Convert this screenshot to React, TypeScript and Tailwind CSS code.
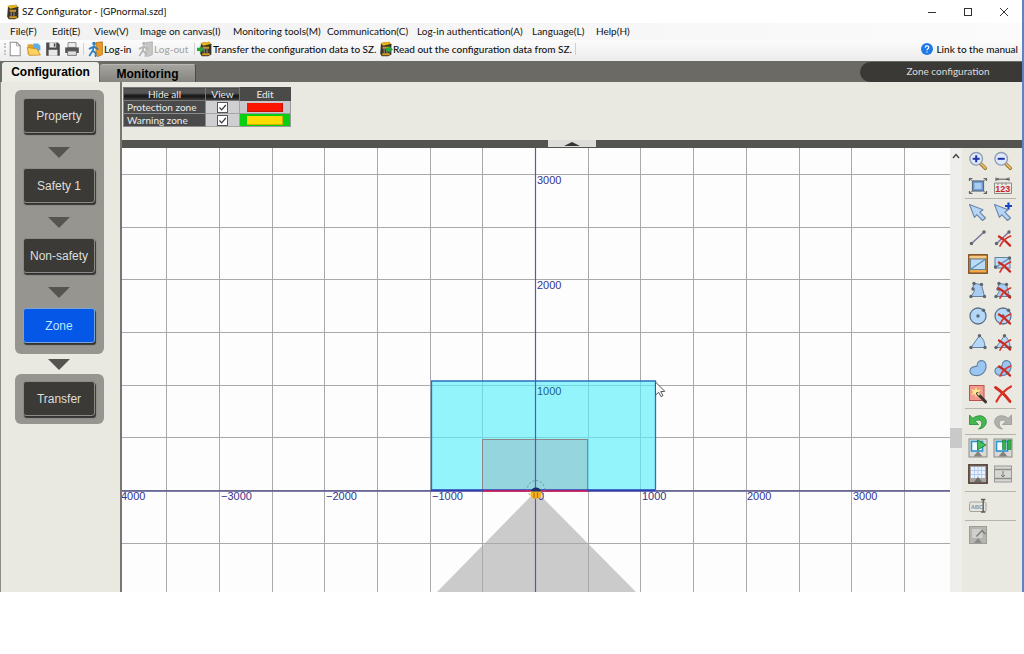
import { useState, type ReactNode } from "react";

const MENUS = [
  { label: "File(F)", width: "w-[42px]" },
  { label: "Edit(E)", width: "w-[42px]" },
  { label: "View(V)", width: "w-[46px]" },
  { label: "Image on canvas(I)", width: "w-[93px]" },
  { label: "Monitoring tools(M)", width: "w-[94px]" },
  { label: "Communication(C)", width: "w-[90px]" },
  { label: "Log-in authentication(A)", width: "w-[115px]" },
  { label: "Language(L)", width: "w-[64px]" },
  { label: "Help(H)", width: "w-[42px]" },
];

const Icon = ({ children, className = "size-5" }: { children: ReactNode; className?: string }) => (
  <svg viewBox="0 0 20 20" className={`${className} shrink-0`} fill="none" aria-hidden="true">
    {children}
  </svg>
);

/* ---------- shared icon parts ---------- */
const RedX = () => (
  <>
    <path d="M6 8.5 C10 10.5 14 14 17 17.5" stroke="#c8281e" strokeWidth="2.4" strokeLinecap="round" />
    <path d="M17.5 8 C13 10 9 13.5 7 18" stroke="#d8352a" strokeWidth="1.8" strokeLinecap="round" />
  </>
);
const Dot = ({ x, y }: { x: number; y: number }) => <circle cx={x} cy={y} r="1.7" fill="#5c6670" />;

const Magnifier = ({ plus }: { plus?: boolean }) => (
  <Icon>
    <path d="M12.5 12.5 L17.3 17.3" stroke="#9a7a3a" strokeWidth="3.6" strokeLinecap="round" />
    <path d="M13 12.6 L17.3 17" stroke="#e8b860" strokeWidth="1.8" strokeLinecap="round" />
    <circle cx="8.2" cy="7.8" r="6.3" fill="#dfe9fa" stroke="#8f9db5" strokeWidth="1.4" />
    <path d="M4.7 7.8 H11.7" stroke="#1d35a8" strokeWidth="2" />
    {plus && <path d="M8.2 4.3 V11.3" stroke="#1d35a8" strokeWidth="2" />}
  </Icon>
);
const Fit = () => (
  <Icon>
    <rect x="4.5" y="5" width="11" height="10" fill="#6f9fd8" stroke="#5b6b80" strokeWidth="1.2" />
    <rect x="6.5" y="7" width="7" height="6" fill="#a8ccf2" />
    <path d="M1.5 5V2.5H4.5M15.5 2.5H18.5V5M18.5 15V17.5H15.5M4.5 17.5H1.5V15" stroke="#666" strokeWidth="1.2" />
    <path d="M2 3L4.5 5M18 3L15.5 5M18 17L15.5 15M2 17L4.5 15" stroke="#777" />
  </Icon>
);
const Ruler = () => (
  <Icon>
    <path d="M3 3.2H16M3 1.5V5M16 1.5V5" stroke="#555" />
    <path d="M3 3.2L5.5 1.8V4.6ZM16 3.2L13.5 1.8V4.6Z" fill="#555" />
    <path d="M1.5 17.5V7H18.5V17.5H1.5M5 7V9M9 7V9M13 7V9" stroke="#8a8a86" />
    <text x="2.3" y="16.3" fontSize="9" fontWeight="bold" fill="#c9252c" fontFamily="Liberation Sans, sans-serif">123</text>
  </Icon>
);
const Arrow = ({ plus }: { plus?: boolean }) => (
  <Icon>
    <path d="M1.5 2.5L15 7.8L11.8 10.2L17.5 16L14.5 18.5L8.8 12.6L6.5 15.5Z" fill="#b5d5f7" stroke="#6d86a8" strokeWidth="1.1" strokeLinejoin="round" />
    {plus && <path d="M15.5 0.5V7.5M12 4H19" stroke="#1646c8" strokeWidth="2.2" />}
  </Icon>
);
const LineTool = ({ del }: { del?: boolean }) => (
  <Icon>
    <path d="M3.5 15.5L15.5 4.5" stroke="#7c6f96" strokeWidth="1.4" />
    <Dot x={3.5} y={15.5} />
    <Dot x={16} y={4} />
    {del && <RedX />}
  </Icon>
);
const RectTool = ({ del, active }: { del?: boolean; active?: boolean }) => (
  <Icon>
    {active && <rect x="0.8" y="0.8" width="18.4" height="18.4" fill="#f3a94b" stroke="#7a4c22" strokeWidth="1.4" />}
    <rect x={active ? 2.5 : 2} y={active ? 5 : 3.5} width="15" height="10.5" fill="#b9dbf7" stroke="#66839c" />
    <path d={active ? "M3 15L17 5.5" : "M2.5 13.5L16.5 4"} stroke="#5e88ac" strokeWidth="1.2" />
    {active && <path d="M1.5 3H18.5" stroke="#fbd698" strokeWidth="1.5" />}
    {del && (
      <>
        <Dot x={2.5} y={13} />
        <Dot x={16.5} y={4} />
        <RedX />
      </>
    )}
  </Icon>
);
const PolyTool = ({ del }: { del?: boolean }) => (
  <Icon>
    <path d="M6 3.5L13.5 4.5L16.5 16.5H3L6.5 11L4.5 8.5Z" fill="#a9cdf2" stroke="#6b8199" />
    <Dot x={6} y={3.5} />
    <Dot x={13.5} y={4.5} />
    <Dot x={16.5} y={16.5} />
    <Dot x={3} y={16.5} />
    <Dot x={5} y={9} />
    {del && <RedX />}
  </Icon>
);
const CircleTool = ({ del }: { del?: boolean }) => (
  <Icon>
    <circle cx="10" cy="10" r="8" fill="#b4d8fa" stroke="#5f7187" strokeWidth="1.3" />
    <Dot x={10} y={10} />
    <Dot x={15.5} y={4.3} />
    {del && <RedX />}
  </Icon>
);
const SectorTool = ({ del }: { del?: boolean }) => (
  <Icon>
    <path d="M3 15.5L11.5 3.5Q17 7.5 17 15.5Z" fill="#b4d8fa" stroke="#6b8199" />
    <Dot x={3} y={15.5} />
    <Dot x={11.5} y={3.8} />
    <Dot x={17} y={15.5} />
    {del && <RedX />}
  </Icon>
);
const BlobTool = ({ del }: { del?: boolean }) => (
  <Icon>
    <path d="M9 8.2C8.5 4 12 2 14.8 2.8C18.5 4 18.8 9 17 12.5C15 16.5 11 18 7 17.5C2.5 17 1 13.5 2.5 10.8C4 8.3 7 8.6 9 8.2Z" fill="#9ac6f2" stroke="#5f7d9c" strokeWidth="1.1" />
    {del && <RedX />}
  </Icon>
);
const Wand = () => (
  <Icon>
    <rect x="1.5" y="1.5" width="14.5" height="15" fill="#f29a8c" stroke="#c0504a" />
    <path d="M8 3L9.3 6.2L13 5.2L10.6 8.2L13 11L9.4 10L8 13.5L6.7 10L3.2 11L5.4 8.2L3.2 5.2L6.8 6.2Z" fill="#ffe98a" />
    <path d="M9.5 9.5L17.5 17.8" stroke="#3c3630" strokeWidth="3" strokeLinecap="round" />
    <path d="M9.5 9L11.5 11" stroke="#e9d9ae" strokeWidth="2" />
  </Icon>
);
const DeleteAll = () => (
  <Icon>
    <path d="M2.5 3.5C7 6.5 13 12 17 17.5" stroke="#d42a20" strokeWidth="2.8" strokeLinecap="round" />
    <path d="M18 2.5C11.5 6 6.5 11.5 3.5 17.5" stroke="#d8352a" strokeWidth="2.2" strokeLinecap="round" />
  </Icon>
);
const Undo = ({ redo }: { redo?: boolean }) => (
  <Icon className={redo ? "size-5 -scale-x-100" : "size-5"}>
    <path
      d="M1.5 3V12.5H10.5L7.3 9.3C10.5 6.8 14 8.5 13.8 11.8C13.7 14 12.5 15.8 10.5 17C15.5 16.5 18.5 13.2 18.3 9.4C18 3.6 10.5 1.7 4.8 6.3Z"
      fill={redo ? "#b0b0ac" : "#45b84f"}
      stroke={redo ? "#969692" : "#1d8a30"}
      strokeWidth="0.8"
    />
  </Icon>
);
const Play = ({ pause }: { pause?: boolean }) => (
  <Icon>
    <rect x="1" y="1" width="18" height="18" fill="#d8d8d4" stroke="#8b8b87" />
    <rect x="3.5" y="3.5" width="11" height="9.5" fill="#f4faff" stroke="#2b95d2" strokeWidth="1.6" />
    <path d="M10 13L14.5 18.5H5.5Z" fill="#85827e" />
    {pause ? (
      <path d="M9.5 2H12.8V11.5H9.5ZM14.7 2H18V11.5H14.7Z" fill="#35b14f" stroke="#147a2b" strokeWidth="0.6" />
    ) : (
      <path d="M9.5 2L18 7L9.5 12Z" fill="#45c05c" stroke="#147a2b" strokeWidth="0.8" />
    )}
  </Icon>
);
const GridTool = () => (
  <Icon>
    <rect x="0.9" y="0.9" width="18.2" height="18.2" fill="#a7a4a2" stroke="#513c36" strokeWidth="1.6" />
    <rect x="3" y="3" width="14" height="11" fill="#e8f2ff" />
    <path d="M3 6.5H17M3 10.5H17M6.5 3V14M10 3V14M13.5 3V14" stroke="#a6c5e8" strokeWidth="0.8" />
    <path d="M10 13L14 18H6Z" fill="#6d6a6a" />
  </Icon>
);
const Splitter = () => (
  <Icon>
    <rect x="1.5" y="2" width="17" height="16" fill="#d6d6d2" stroke="#9a9a96" />
    <path d="M1.5 5.5H18.5M1.5 14.5H18.5" stroke="#8e8e8a" strokeWidth="1.4" />
    <path d="M10 7V13M8 11L10 13L12 11" stroke="#77777a" />
  </Icon>
);
const TextTool = () => (
  <Icon>
    <rect x="1.5" y="6" width="16.5" height="9.5" rx="1.5" fill="#e4e4e0" stroke="#a3a39f" />
    <text x="3" y="13" fontSize="5.5" fontWeight="bold" fill="#8e8e8a" fontFamily="Liberation Sans, sans-serif">ABC</text>
    <path d="M13 3.5H17.4M13 16H17.4M15.2 3.5V16" stroke="#5d5d5a" strokeWidth="1.4" />
  </Icon>
);
const Calibrate = () => (
  <Icon>
    <rect x="1.5" y="1.5" width="17" height="17" fill="#b4b4b0" stroke="#9c9c98" />
    <rect x="4" y="4" width="10.5" height="9" fill="#cfcfcb" />
    <path d="M10 13L14 18H6Z" fill="#8b8b87" />
    <path d="M8.5 11.5L14 5.5C15 7 16 8 17.5 9" stroke="#7d7d79" strokeWidth="1.4" />
  </Icon>
);
const Scanner = ({ dir }: { dir?: "in" | "out" }) => (
  <Icon className="size-4">
    <path d="M5 2.5L15 1L18 4V17L14 19H6L4 16Z" fill="#38342c" />
    <path d="M4 2.5L14.5 1L18 3.5L8 6Z" fill="#e9b41d" />
    <path d="M7 8.5H15M6.5 16.5H16" stroke="#d69a1c" strokeWidth="2.6" />
    <path d="M9 8V15M12.5 8V15" stroke="#8d8471" strokeWidth="1.4" />
    {dir === "in" && <path d="M0 8.5H3.5V6L9 10.5L3.5 15V12.5H0Z" fill="#28a83a" />}
    {dir === "out" && <path d="M11 8.5H14.5V6L20 10.5L14.5 15V12.5H11Z" fill="#28a83a" />}
  </Icon>
);
const Door = ({ off }: { off?: boolean }) => (
  <Icon className="size-4">
    <path d="M10 2L18 1V17L12 19.5L10 17Z" fill={off ? "#c6c6c6" : "#e89c2a"} stroke={off ? "#b0b0b0" : "#b86f14"} />
    <circle cx="7.5" cy="3" r="2.2" fill={off ? "#b5b5b5" : "#2d7fc2"} />
    <path d="M7.5 6L6 12L9.5 15V19M6 12L2 18M7.5 7L2 9.5M7.5 7L12 10" stroke={off ? "#b5b5b5" : "#2d7fc2"} strokeWidth="2.2" strokeLinecap="round" />
  </Icon>
);

const TOOLS: { first: boolean; cell: string; box: string; icons: [string, ReactNode][] }[] = [
  {
    first: true,
    cell: "h-[25px]",
    box: "",
    icons: [["Zoom in", <Magnifier plus />], ["Zoom out", <Magnifier />], ["Fit", <Fit />], ["Scale", <Ruler />]],
  },
  {
    first: false,
    cell: "h-[26px]",
    box: "pb-px",
    icons: [
      ["Select", <Arrow />], ["Add to selection", <Arrow plus />],
      ["Line", <LineTool />], ["Erase line", <LineTool del />],
      ["Rectangle", <RectTool active />], ["Erase rectangle", <RectTool del />],
      ["Polygon", <PolyTool />], ["Erase polygon", <PolyTool del />],
      ["Circle", <CircleTool />], ["Erase circle", <CircleTool del />],
      ["Sector", <SectorTool />], ["Erase sector", <SectorTool del />],
      ["Freehand", <BlobTool />], ["Erase freehand", <BlobTool del />],
      ["Auto", <Wand />], ["Delete", <DeleteAll />],
    ],
  },
  { first: false, cell: "h-[25px]", box: "", icons: [["Undo", <Undo />], ["Redo", <Undo redo />]] },
  {
    first: false,
    cell: "h-[26px]",
    box: "pb-1",
    icons: [["Play", <Play />], ["Pause", <Play pause />], ["Grid", <GridTool />], ["Split", <Splitter />]],
  },
  { first: false, cell: "h-[28px]", box: "", icons: [["Label", <TextTool />]] },
  { first: false, cell: "h-[28px]", box: "", icons: [["Calibrate", <Calibrate />]] },
];

const DownArrow = () => (
  <svg viewBox="0 0 22 11" className="h-[11px] w-[22px]" aria-hidden="true">
    <path d="M0 0H22L11 11Z" fill="#55544f" />
  </svg>
);

function StepButton({ label, active, onClick }: { label: string; active?: boolean; onClick: () => void }) {
  return (
    <button
      type="button"
      onClick={onClick}
      className={`h-[35px] w-[72px] rounded-[3px] border text-[12px] whitespace-nowrap shadow-[1px_2px_1px_#333] ${
        active ? "border-[#78a5d8] bg-[#0557e8] text-[#b9e6ff]" : "border-[#8b8a85] bg-[#3b3a36] text-[#dededb]"
      }`}
    >
      {label}
    </button>
  );
}

function Sidebar() {
  const [step, setStep] = useState("Zone");
  const steps = ["Property", "Safety 1", "Non-safety", "Zone"];
  return (
    <nav className="flex w-[122px] shrink-0 flex-col items-center border-r-2 border-l border-r-[#77766f] border-l-[#8c8c88] bg-[#e9e9e1] pt-2 pr-[3px]">
      <div className="flex w-[89px] flex-col items-center rounded-md bg-[#969590] pt-2 pb-[11px]">
        {steps.map((s, i) => (
          <div key={s} className="flex flex-col items-center">
            {i > 0 && (
              <div className="flex h-[35px] items-center pt-1">
                <DownArrow />
              </div>
            )}
            <StepButton label={s} active={s === step} onClick={() => setStep(s)} />
          </div>
        ))}
      </div>
      <div className="flex h-5 items-center">
        <DownArrow />
      </div>
      <div className="flex w-[89px] justify-center rounded-md bg-[#969590] pt-[7px] pb-2">
        <StepButton label="Transfer" active={step === "Transfer"} onClick={() => setStep("Transfer")} />
      </div>
    </nav>
  );
}

function ZoneTable() {
  const zones = [
    { name: "Protection zone", cell: "bg-[#c9c9cb]", swatch: "bg-[#fb1400]" },
    { name: "Warning zone", cell: "bg-[#08d010]", swatch: "bg-[#ffdc00]" },
  ];
  const [on, setOn] = useState([true, true]);
  const glossy = "border border-[#777] bg-linear-to-b from-[#555] from-40% via-[#111] via-60% to-[#444] p-0 font-normal";
  return (
    <table className="w-[168px] table-fixed border-collapse font-[Lato,'Liberation_Sans',sans-serif] text-[10px] leading-[11px] text-[#ececec]">
      <thead>
        <tr className="h-[13px]">
          <th className={`w-[82px] ${glossy}`}>
            <button type="button" className="block w-full">Hide all</button>
          </th>
          <th className={`w-[34px] ${glossy}`}>
            <button type="button" className="block w-full">View</button>
          </th>
          <th className="border border-[#4a4a48] bg-[#4a4a48] p-0 font-normal">Edit</th>
        </tr>
      </thead>
      <tbody>
        {zones.map((z, i) => (
          <tr key={z.name} className="h-[13px]">
            <td className="border border-[#8b8b8b] bg-[#4a4a4a] p-0 pl-[3px] whitespace-nowrap">{z.name}</td>
            <td className="border border-[#a5a5a5] bg-[#cfcfd1] p-0">
              <label className="mx-auto grid size-[11px]">
                <input
                  type="checkbox"
                  aria-label={`View ${z.name}`}
                  checked={on[i]}
                  onChange={() => setOn(on.map((v, k) => (k === i ? !v : v)))}
                  className="col-start-1 row-start-1 size-[11px] appearance-none border border-[#555] bg-white"
                />
                {on[i] && (
                  <svg viewBox="0 0 11 11" className="pointer-events-none col-start-1 row-start-1 size-[11px]" fill="none">
                    <path d="M2.5 5.5L4.7 7.8L8.8 3" stroke="#333" strokeWidth="1.2" />
                  </svg>
                )}
              </label>
            </td>
            <td className={`border border-[#999] p-0 ${z.cell}`}>
              <button type="button" aria-label={`Edit ${z.name}`} className={`mx-auto block h-[9px] w-9 ${z.swatch} border-r border-b border-black/20`} />
            </td>
          </tr>
        ))}
      </tbody>
    </table>
  );
}

/* Canvas geometry: origin of the scanner and pixels per 500 mm */
const OX = 414;
const OY = 343;
const STEP = 52.7;

function ZoneCanvas() {
  const cols = Array.from({ length: 15 }, (_, i) => OX + (i - 7) * STEP);
  const rows = Array.from({ length: 8 }, (_, i) => OY + (i - 6) * STEP);
  return (
    <svg viewBox="0 0 828 444" className="block min-w-0 flex-1 bg-[#fdfdfd]" role="img" aria-label="Zone canvas">
      <path d={`M${OX} ${OY}L315 444H514Z`} fill="#cbcbcb" />
      <g stroke="#a9a9ab" strokeWidth="1">
        {cols.map((x) => (
          <line key={x} x1={Math.round(x) - 0.5} x2={Math.round(x) - 0.5} y1="0" y2="444" />
        ))}
        {rows.map((y) => (
          <line key={y} x1="0" x2="828" y1={Math.round(y) - 0.5} y2={Math.round(y) - 0.5} />
        ))}
      </g>
      <rect x="309" y="233" width="224" height="109" fill="#58f0fc" fillOpacity="0.64" />
      <rect x="360.5" y="291.5" width="105" height="51" fill="#9a8e94" fillOpacity="0.3" stroke="#8f8585" />
      <path d="M309.5 342V233H533.5V342" stroke="#2a6fc0" strokeWidth="1.3" fill="none" />
      <path d="M413.5 0V444" stroke="#5b58a8" strokeWidth="1.2" />
      <path d="M0 343H828" stroke="#55558c" strokeWidth="1.4" />
      <path d="M309 342.3H533" stroke="#2b3fb4" strokeWidth="2" />
      <path d="M361 343H466" stroke="#e01c50" strokeWidth="1.5" />
      <circle cx="414" cy="341" r="8.5" stroke="#5a7f96" strokeWidth="0.8" strokeDasharray="2 2" fill="none" />
      <g fontSize="11" fill="#35358c" fontFamily="Liberation Sans, Arial, sans-serif">
        <text x="415" y="36">3000</text>
        <text x="415" y="141">2000</text>
        <text x="415" y="247" fill="#245f80">1000</text>
        <text x="-1" y="352">4000</text>
        <text x="99" y="352">−3000</text>
        <text x="204" y="352">−2000</text>
        <text x="310" y="352">−1000</text>
        <text x="416" y="352">0</text>
        <text x="520" y="352">1000</text>
        <text x="625" y="352">2000</text>
        <text x="731" y="352">3000</text>
      </g>
      <path d="M408.5 343H419.5V348L417 350.5H411L408.5 348Z" fill="#f3b51c" />
      <path d="M412 344.5V350M415.5 344.5V350" stroke="#c76a12" strokeWidth="1.2" />
      <path d="M409 343.5A5 4 0 0 1 419 343.5Z" fill="#1d2f6d" />
      <path d="M533.5 234V247L536.7 244.3L539 248.6L541 247.6L538.8 243.6L542.8 243.3Z" fill="#fafafa" stroke="#555" strokeWidth="1" />
    </svg>
  );
}

function Toolbox() {
  return (
    <aside className="w-[60px] shrink-0 bg-[#e9e9e1] pr-1.5 pl-[3px]">
      {TOOLS.map((group, i) => (
        <div key={i} className={group.first ? "" : "border-t border-[#b5b5ae]"}>
          <div className={`grid grid-cols-[25px_26px] ${group.box}`}>
            {group.icons.map(([name, icon]) => (
              <button key={name} type="button" aria-label={name} className={`flex items-center justify-center ${group.cell}`}>
                {icon}
              </button>
            ))}
          </div>
        </div>
      ))}
    </aside>
  );
}

function Toolbar() {
  return (
    <div className="flex h-[21px] items-center bg-linear-to-b from-[#fcfcfc] to-[#ececec] pr-1 pb-[3px] pl-1 font-[Lato,'Liberation_Sans',sans-serif] text-[10px] font-medium whitespace-nowrap text-[#111]">
      <div className="mr-px h-3 border-l-2 border-dotted border-[#c4c4c4]" />
      <div className="flex w-[76px] gap-[3px]">
        <button type="button" aria-label="New">
          <Icon className="size-4">
            <path d="M4 1.5H12L16.5 6V18.5H4Z" fill="#fff" stroke="#8f8f8f" strokeWidth="1.3" />
            <path d="M12 1.5V6H16.5" stroke="#8f8f8f" />
          </Icon>
        </button>
        <button type="button" aria-label="Open">
          <Icon className="size-4">
            <path d="M2 4H8L10 6.5H16V17H2Z" fill="#e0a32e" />
            <path d="M9 3H15L18 6V12H9Z" fill="#5daee8" />
            <path d="M1.5 8L14 10L18 17.5L4 18Z" fill="#fbd160" stroke="#c98d20" />
          </Icon>
        </button>
        <button type="button" aria-label="Save">
          <Icon className="size-4">
            <path d="M1.5 2H16L18.5 4.5V18.5H1.5Z" fill="#4b4b4b" />
            <path d="M5.5 2H14V8H5.5ZM4.5 11H15.5V18.5H4.5Z" fill="#e8e8e8" />
            <path d="M11 3H13V7H11Z" fill="#4b4b4b" />
          </Icon>
        </button>
        <button type="button" aria-label="Print">
          <Icon className="size-4">
            <path d="M5 2H15V8H5Z" fill="#ededed" stroke="#777" />
            <path d="M1.5 8H18.5V15H1.5Z" fill="#555" />
            <path d="M4.5 12.5H15.5V18H4.5Z" fill="#ddd" stroke="#666" />
          </Icon>
        </button>
      </div>
      <div className="h-3 border-l border-[#d0d0d0]" />
      <button type="button" className="ml-1 flex w-[50px] items-center">
        <Door />
        Log-in
      </button>
      <button type="button" disabled className="flex w-[56px] items-center text-[#a5a5a5]">
        <Door off />
        Log-out
      </button>
      <div className="h-3 border-l border-[#d0d0d0]" />
      <button type="button" className="ml-0.5 flex w-[180px] items-center">
        <Scanner dir="in" />
        Transfer the configuration data to SZ.
      </button>
      <button type="button" className="flex w-[198px] items-center">
        <Scanner dir="out" />
        Read out the configuration data from SZ.
      </button>
      <div className="h-3 border-l border-[#d0d0d0]" />
      <a href="#manual" className="ml-auto flex items-center gap-[3px]">
        <svg viewBox="0 0 12 12" className="size-3" aria-hidden="true">
          <circle cx="6" cy="6" r="6" fill="#1f7ae6" />
          <path d="M4.2 4.6Q4.3 2.9 6 2.9Q7.8 2.9 7.8 4.4Q7.8 5.4 6.7 5.9Q6 6.3 6 7.2M6 8.4V9.6" stroke="#fff" strokeWidth="1.2" fill="none" />
        </svg>
        Link to the manual
      </a>
    </div>
  );
}

export default function App() {
  return (
    <div className="min-h-screen bg-white font-['Liberation_Sans',Arial,sans-serif]">
      <div className="border-r-2 border-[#5c83c4]">
        <header className="flex h-[23px] items-center bg-white pl-1">
          <Scanner />
          <h1 className="ml-0.5 font-[Lato,'Liberation_Sans',sans-serif] text-[10px] text-[#111]">SZ Configurator - [GPnormal.szd]</h1>
          <div className="ml-auto flex items-center text-[#333]">
            <button type="button" aria-label="Minimize" className="flex w-9 justify-center">
              <svg viewBox="0 0 10 10" className="size-[10px]" fill="none"><path d="M1 5.5H9" stroke="currentColor" /></svg>
            </button>
            <button type="button" aria-label="Maximize" className="flex w-9 justify-center">
              <svg viewBox="0 0 10 10" className="size-[10px]" fill="none"><rect x="1.5" y="1.5" width="7" height="7" stroke="currentColor" /></svg>
            </button>
            <button type="button" aria-label="Close" className="flex w-9 justify-center">
              <svg viewBox="0 0 10 10" className="size-[10px]" fill="none"><path d="M1 1L9 9M9 1L1 9" stroke="currentColor" /></svg>
            </button>
          </div>
        </header>

        <div role="menubar" className="flex h-[17px] items-center bg-linear-to-r from-[#f1f1f1] to-[#fbfbfb] pl-2.5 font-[Lato,'Liberation_Sans',sans-serif] text-[10px] text-[#111]">
          {MENUS.map((m) => (
            <button key={m.label} type="button" role="menuitem" className={`shrink-0 text-left whitespace-nowrap ${m.width}`}>
              {m.label}
            </button>
          ))}
        </div>

        <Toolbar />

        <div className="flex h-[21px] items-end bg-[#6b6a65] pl-0.5 text-[12px] font-bold text-black">
          <button type="button" className="h-5 w-[97px] rounded-t-[3px] bg-[#eeeee8]">Configuration</button>
          <button type="button" className="ml-px h-[18px] w-24 rounded-t-[3px] border-t border-r border-[#b8b7b2] border-r-[#4a4a46] bg-linear-to-b from-[#a5a49f] to-[#85847f]">
            Monitoring
          </button>
          <h2 className="ml-auto flex h-5 w-[162px] items-center justify-center rounded-l-[10px] bg-[#3a3935] pb-0.5 pl-3.5 font-[Lato,'Liberation_Sans',sans-serif] text-[10px] font-normal text-[#dcdcda]">
            Zone configuration
          </h2>
        </div>

        <main className="flex">
          <Sidebar />
          <div className="flex min-w-0 flex-1 flex-col">
            <section className="h-[58px] bg-[#e9e9e1] pt-[5px] pl-px">
              <ZoneTable />
            </section>
            <div className="flex h-2 justify-center bg-[#53534f] pb-px">
              <button type="button" aria-label="Collapse" className="flex w-12 items-center justify-center bg-[#dcdcd9]">
                <svg viewBox="0 0 16 4" className="h-1 w-4" aria-hidden="true"><path d="M0 4L8 0L16 4Z" fill="#333" /></svg>
              </button>
            </div>
            <div className="flex">
              <ZoneCanvas />
              <div className="flex w-3 shrink-0 flex-col bg-[#eeeeed]">
                <button type="button" aria-label="Scroll up" className="flex h-4 items-center justify-center">
                  <svg viewBox="0 0 8 6" className="h-1.5 w-2" fill="none"><path d="M1 5L4 1.5L7 5" stroke="#444" strokeWidth="1.4" /></svg>
                </button>
                <div className="grow-[264]" />
                <div className="h-5 bg-[#c9c9c9]" />
                <div className="grow-[144]" />
              </div>
              <Toolbox />
            </div>
          </div>
        </main>
      </div>
    </div>
  );
}
